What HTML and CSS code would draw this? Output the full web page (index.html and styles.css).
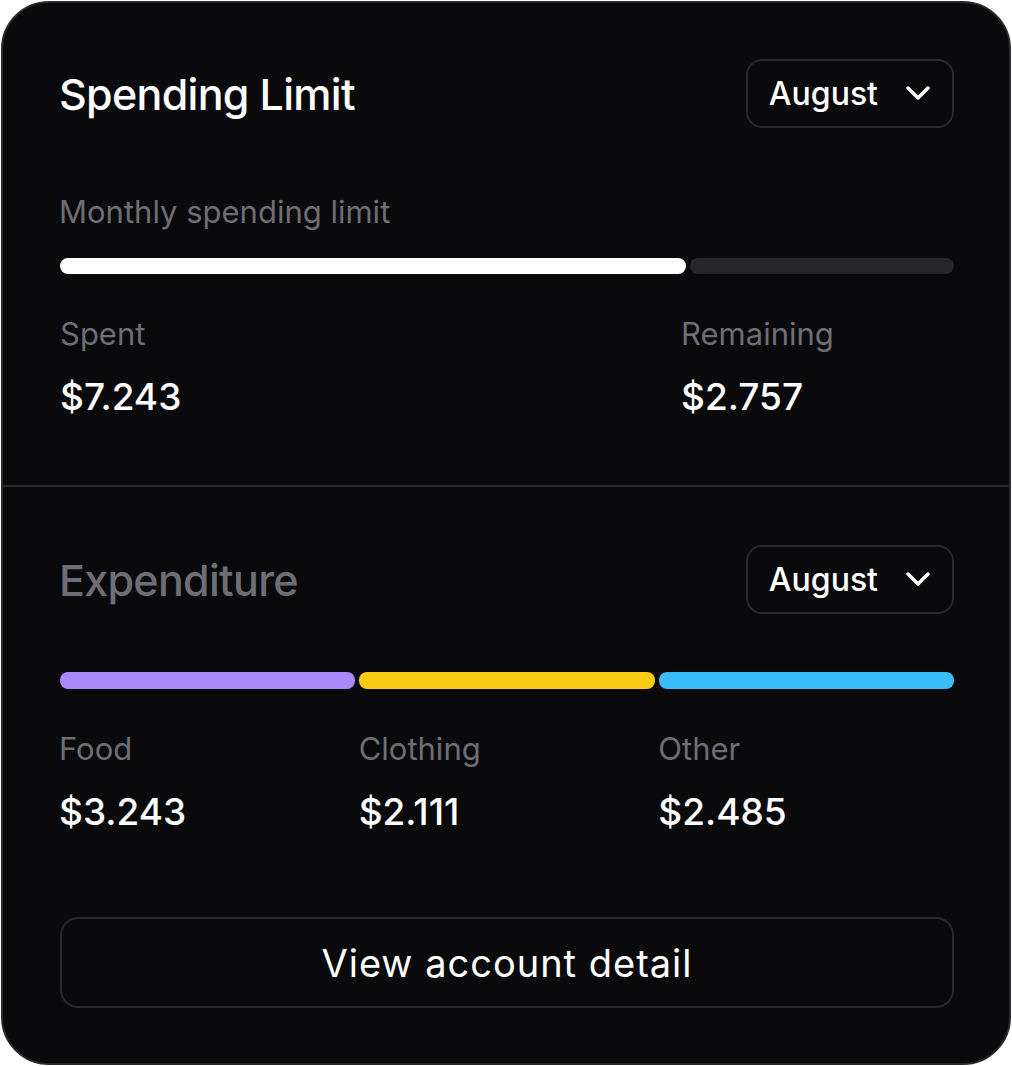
FILE: index.html
```html
<!DOCTYPE html>
<html lang="en">
<head>
<meta charset="utf-8">
<title>Spending Limit</title>
<link rel="stylesheet" href="styles.css">
</head>
<body>
<div class="card">
  <section class="section limit">
    <div class="header">
      <h2 class="title">Spending Limit</h2>
      <button class="select" type="button">
        <span>August</span>
        <svg class="chev" width="28" height="20" viewBox="0 0 28 20"><polyline points="4,4 14,14 24,4" fill="none" stroke="#fff" stroke-width="3.5" stroke-linecap="round" stroke-linejoin="round"/></svg>
      </button>
    </div>
    <div class="caption">Monthly spending limit</div>
    <div class="track">
      <div class="fill white" style="flex: 0 0 70%"></div>
      <div class="fill rest"></div>
    </div>
    <div class="stats two">
      <div class="stat">
        <div class="label">Spent</div>
        <div class="value">$7.243</div>
      </div>
      <div class="stat">
        <div class="label">Remaining</div>
        <div class="value">$2.757</div>
      </div>
    </div>
  </section>
  <section class="section exp">
    <div class="header">
      <h2 class="title muted">Expenditure</h2>
      <button class="select" type="button">
        <span>August</span>
        <svg class="chev" width="28" height="20" viewBox="0 0 28 20"><polyline points="4,4 14,14 24,4" fill="none" stroke="#fff" stroke-width="3.5" stroke-linecap="round" stroke-linejoin="round"/></svg>
      </button>
    </div>
    <div class="segments">
      <div class="fill purple"></div>
      <div class="fill yellow"></div>
      <div class="fill blue"></div>
    </div>
    <div class="stats three">
      <div class="stat">
        <div class="label">Food</div>
        <div class="value">$3.243</div>
      </div>
      <div class="stat">
        <div class="label">Clothing</div>
        <div class="value">$2.111</div>
      </div>
      <div class="stat">
        <div class="label">Other</div>
        <div class="value">$2.485</div>
      </div>
    </div>
    <button class="detail" type="button">View account detail</button>
  </section>
</div>
</body>
</html>
```
FILE: styles.css
```css
* { box-sizing: border-box; }
html, body { margin: 0; padding: 0; background: #ffffff; }
body { font-family: Inter, "Noto Sans", sans-serif; color: #ffffff; }

.card {
  width: 1010px;
  height: 1064px;
  margin: 1px;
  border: 2px solid #2a2a2e;
  border-radius: 48px;
  background: #0a0a0c;
  display: flex;
  flex-direction: column;
  overflow: hidden;
}

.section { padding: 0 55px 0 57px; }
.limit { padding-top: 56px; padding-bottom: 66px; border-bottom: 2px solid #2a2a2e; }
.exp { padding-top: 58px; }

.header {
  height: 69px;
  display: flex;
  align-items: center;
  justify-content: space-between;
}
.title {
  margin: 0 0 0 -1px;
  font-size: 43px;
  line-height: 52px;
  font-weight: 500;
  letter-spacing: -0.7px;
  color: #ffffff;
}
.title.muted { color: #6e6e76; }

.select {
  height: 69px;
  display: flex;
  align-items: center;
  gap: 26px;
  padding: 0 20px 0 21px;
  border: 2px solid #2a2a2e;
  border-radius: 16px;
  background: transparent;
  color: #ffffff;
  font-family: inherit;
  font-size: 32px;
  font-weight: 500;
  line-height: 40px;
}
.chev { display: block; }

.caption {
  margin-top: 64px;
  margin-left: -1px;
  font-size: 31px;
  line-height: 40px;
  color: #6e6e76;
}

.track {
  margin-top: 26px;
  display: flex;
  gap: 4px;
  height: 16px;
}
.fill { height: 100%; border-radius: 8px; }
.white { background: #ffffff; }
.rest { flex: 1; background: #27272a; }

.segments {
  margin-top: 58px;
  height: 17px;
  display: grid;
  grid-template-columns: 1fr 1fr 1fr;
  gap: 4px;
}
.purple { background: #a78bfa; }
.yellow { background: #facc15; }
.blue { background: #38bdf8; }

.stats { display: grid; margin-top: 40px; }
.stats.two { grid-template-columns: 621px 1fr; }
.stats.three { grid-template-columns: 1fr 1fr 1fr; gap: 4px; margin-left: -1px; }

.label {
  font-size: 31px;
  line-height: 40px;
  color: #6e6e76;
}
.value {
  margin-top: 21px;
  font-size: 37px;
  line-height: 44px;
  font-weight: 500;
  color: #ffffff;
}

.detail {
  display: block;
  width: 100%;
  height: 91px;
  margin-top: 83px;
  border: 2px solid #2a2a2e;
  border-radius: 18px;
  background: transparent;
  color: #ffffff;
  font-family: inherit;
  font-size: 38px;
  font-weight: 400;
  letter-spacing: 1px;
}
```
